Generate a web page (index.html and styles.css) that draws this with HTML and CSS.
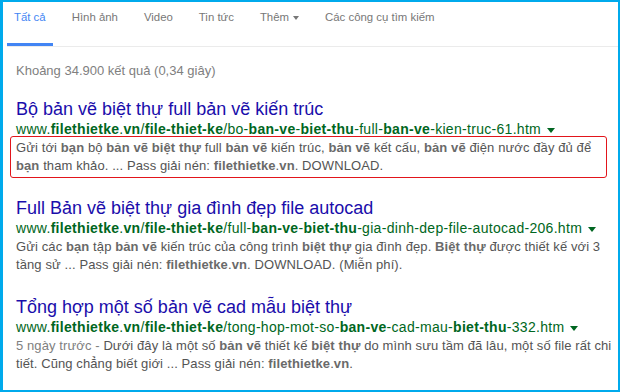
FILE: index.html
```html
<!DOCTYPE html>
<html lang="vi">

<head>
    <meta charset="UTF-8">
    <meta name="viewport" content="width=device-width, initial-scale=1.0">
    <title>Kết quả tìm kiếm</title>
    <link rel="stylesheet" href="styles.css">
</head>

<body>
    <div class="frame">
        <nav class="tabs">
            <a class="tab active" href="#">Tất cả</a>
            <a class="tab" href="#">Hình ảnh</a>
            <a class="tab" href="#">Video</a>
            <a class="tab" href="#">Tin tức</a>
            <a class="tab" href="#">Thêm<span class="caret"></span></a>
            <a class="tab" href="#">Các công cụ tìm kiếm</a>
        </nav>

        <div class="results">
            <div class="stats">Khoảng 34.900 kết quả (0,34 giây)</div>

            <div class="result">
                <h3 class="title"><a href="#">Bộ bản vẽ biệt thự full bản vẽ kiến trúc</a></h3>
                <div class="url">www.<b>filethietke</b>.<b>vn</b>/<b>file-thiet-ke</b>/bo-<b>ban-ve</b>-<b>biet-thu</b>-full-<b>ban-ve</b>-kien-truc-61.htm<span class="arrow"></span></div>
                <div class="snippet highlight">Gửi tới <b>bạn</b> bộ <b>bản vẽ biệt thự</b> full <b>bản vẽ</b> kiến trúc, <b>bản vẽ</b> kết cấu, <b>bản vẽ</b> điện nước đầy đủ để<br><b>bạn</b> tham khảo. ... Pass giải nén: <b>filethietke</b>.<b>vn</b>. DOWNLOAD.</div>
            </div>

            <div class="result">
                <h3 class="title"><a href="#">Full Bản vẽ biệt thự gia đình đẹp file autocad</a></h3>
                <div class="url">www.<b>filethietke</b>.<b>vn</b>/<b>file-thiet-ke</b>/full-<b>ban-ve</b>-<b>biet-thu</b>-gia-dinh-dep-file-autocad-206.htm<span class="arrow"></span></div>
                <div class="snippet">Gửi các <b>bạn</b> tập <b>bản vẽ</b> kiến trúc của công trình <b>biệt thự</b> gia đình đẹp. <b>Biệt thự</b> được thiết kế với 3<br>tầng sử ... Pass giải nén: <b>filethietke</b>.<b>vn</b>. DOWNLOAD. (Miễn phí).</div>
            </div>

            <div class="result">
                <h3 class="title"><a href="#">Tổng hợp một số bản vẽ cad mẫu biệt thự</a></h3>
                <div class="url">www.<b>filethietke</b>.<b>vn</b>/<b>file-thiet-ke</b>/tong-hop-mot-so-<b>ban-ve</b>-cad-mau-<b>biet-thu</b>-332.htm<span class="arrow"></span></div>
                <div class="snippet"><span class="date">5 ngày trước - </span>Dưới đây là một số <b>bản vẽ</b> thiết kế <b>biệt thự</b> do mình sưu tầm đã lâu, một số file rất chi<br>tiết. Cũng chẳng biết giới ... Pass giải nén: <b>filethietke</b>.<b>vn</b>.</div>
            </div>
        </div>
    </div>
</body>

</html>
```

FILE: styles.css
```css
body {
    margin: 0;
    font-family: 'Liberation Sans', Arial, sans-serif;
    background-color: #fff;
}

.frame {
    width: 620px;
    height: 392px;
    box-sizing: border-box;
    border: 2px solid #00aaec;
    border-left-width: 3px;
    overflow: hidden;
}

.tabs {
    display: flex;
    margin-left: 4px;
    border-bottom: 1px solid #ebebeb;
}

.tab {
    padding: 7px 7px 18px;
    margin-right: 12px;
    font-size: 11.4px;
    line-height: 16px;
    color: #777;
    text-decoration: none;
    border-bottom: 3px solid transparent;
}

.tab.active {
    color: #4285f4;
    border-bottom-color: #4285f4;
}

.caret {
    display: inline-block;
    margin-left: 4px;
    vertical-align: middle;
    border-left: 3.5px solid transparent;
    border-right: 3.5px solid transparent;
    border-top: 4px solid #777;
}

.results {
    padding: 15px 0 0 13px;
}

.stats {
    font-size: 13px;
    line-height: 18px;
    color: #808080;
    margin-bottom: 18px;
}

.result {
    margin-bottom: 22px;
}

.title {
    margin: 0;
    font-size: 18px;
    line-height: 22px;
    font-weight: normal;
}

.title a {
    color: #1a0dab;
    text-decoration: none;
}

.url {
    font-size: 14px;
    line-height: 18px;
    color: #006621;
    white-space: nowrap;
    letter-spacing: 0.3px;
}

.arrow {
    display: inline-block;
    margin-left: 6px;
    vertical-align: middle;
    border-left: 4px solid transparent;
    border-right: 4px solid transparent;
    border-top: 5px solid #006621;
}

.snippet {
    margin-top: 1px;
    font-size: 13px;
    line-height: 18px;
    color: #545454;
    white-space: nowrap;
    letter-spacing: 0.1px;
}

.snippet b {
    color: #6a6a6a;
}

.date {
    color: #808080;
}

.highlight {
    margin: -2px 11px -3px -6px;
    padding: 2px 5px 2px;
    border: 1px solid #e2151b;
    border-radius: 3px;
}
```
